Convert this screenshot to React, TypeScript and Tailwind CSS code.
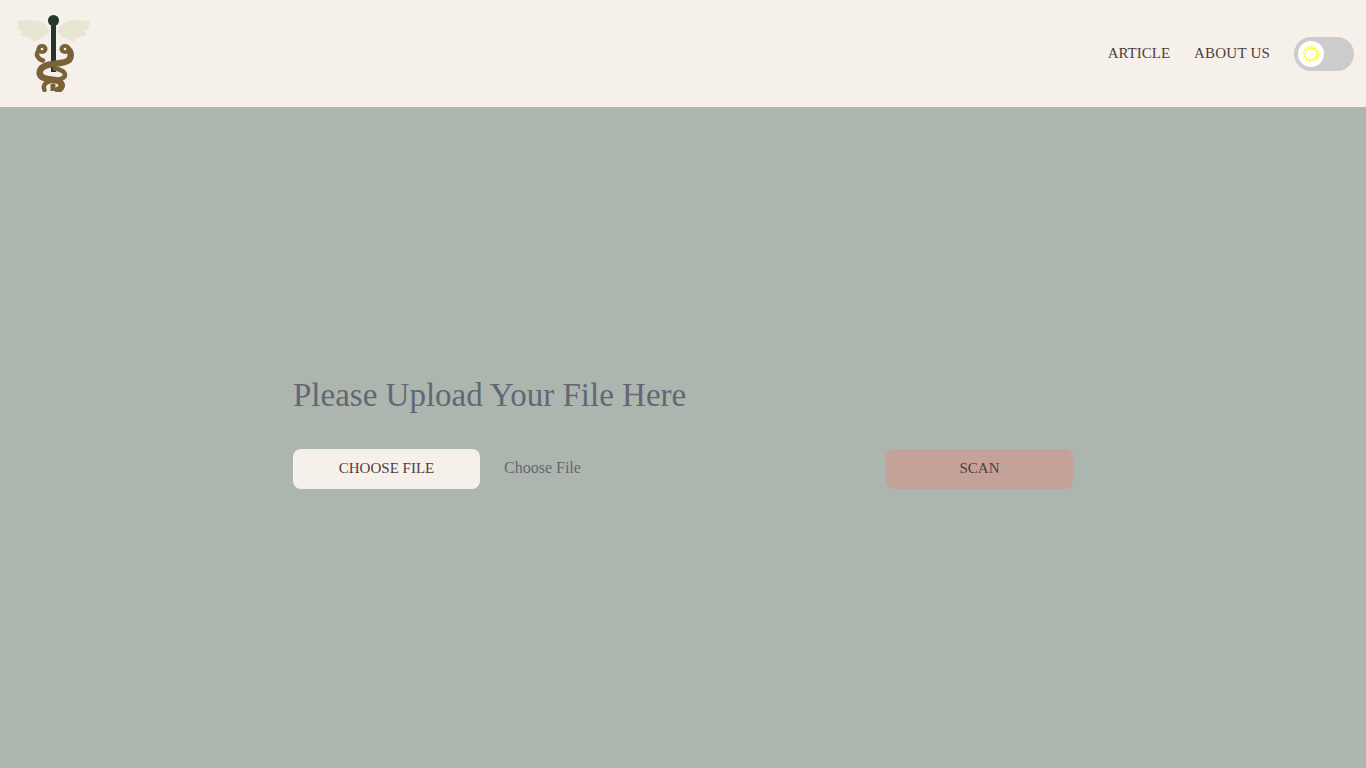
import React from 'react';

const Logo = () => (
  <svg width="73" height="77" viewBox="17 15 73 77" fill="none">
    {/* wings */}
    <path d="M17 21 C24 20 30 20 36 20.5 C42 21 47 25 50 32 C45 37 39 40 33 41.6 C32 39.5 31 38 29 37.5 C26 37 23 36 20 35 C21 33 22 32 23 31 C21 31 20 30 19 29.5 C18 27 18 24 17 21 Z" fill="#e6e6d3" />
    <path d="M90 21 C83 20 77 20 71 20.5 C65 21 60 25 57 32 C62 37 68 40 74 41.6 C75 39.5 76 38 78 37.5 C81 37 84 36 87 35 C86 33 85 32 84 31 C86 31 87 30 88 29.5 C89 27 89 24 90 21 Z" fill="#e6e6d3" />
    {/* staff */}
    <circle cx="53.5" cy="20.5" r="5.5" fill="#27352a" />
    <rect x="51" y="22" width="5" height="50" fill="#27352a" />
    <path d="M50.5 91 V85 C50.5 83 55.5 83 55.5 85 V91 Z" fill="#7a6238" />
    {/* snakes */}
    <path d="M55 68.5 C59 69 65 71 65 75 C65 79 58 79.5 53 80.5 C47 81.5 42 84 44.5 90" stroke="#7a6238" strokeWidth="4.5" strokeLinecap="round" />
    <path d="M66 48 C71 50 72 56 69 60 C64 65 50 62 43 67 C38 71 39 76 44 78 C49 80 56 79 60 82 C63 85 62 88 58 90" stroke="#7a6238" strokeWidth="6.5" strokeLinecap="round" />
    <path d="M42 48 C37 50 36 55 38 57 C39 59 41 60 43 60.5" stroke="#7a6238" strokeWidth="4.5" strokeLinecap="round" />
    <ellipse cx="42" cy="49" rx="5.5" ry="5" fill="#7a6238" />
    <ellipse cx="65" cy="49" rx="5.5" ry="5" fill="#7a6238" />
    <circle cx="42" cy="49" r="1.3" fill="#f5f0ea" />
    <circle cx="65" cy="49" r="1.3" fill="#f5f0ea" />
  </svg>
);

const Sun = () => (
  <svg width="18" height="18" viewBox="0 0 18 18" fill="none">
    <circle cx="9" cy="9" r="6.2" stroke="#ffff00" strokeWidth="1.2" />
    <circle cx="9" cy="9" r="7.6" stroke="#ffff00" strokeWidth="1.4" strokeDasharray="1.6 2.38" />
  </svg>
);

const App: React.FC = () => {
  return (
    <div className="min-h-screen flex flex-col bg-[#adb6ae] font-['Liberation_Serif',serif]">
      <nav className="h-[107px] bg-[#f5f0ea] flex items-center justify-between pl-[17px] pr-3">
        <Logo />
        <div className="flex items-center gap-6 text-[#4f3d3d] text-[15px] pt-px">
          <a href="#" className="-mt-0.5">ARTICLE</a>
          <a href="#" className="tracking-[0.2px] -mt-0.5">ABOUT US</a>
          <div className="w-[60px] h-[34px] rounded-full bg-[#cccccc] flex items-center px-1">
            <div className="w-[26px] h-[26px] rounded-full bg-white flex items-center justify-center">
              <Sun />
            </div>
          </div>
        </div>
      </nav>

      <main className="flex-1 flex items-center justify-center pb-[11px]">
        <div className="w-[780px]">
          <h1 className="text-[33px] leading-[38px] text-[#636775] mt-px mb-[35px]">Please Upload Your File Here</h1>
          <div className="flex items-center">
            <button className="w-[187px] h-10 pb-0.5 rounded-lg bg-[#f5f0ea] text-[#4f3d3d] text-[15px]">CHOOSE FILE</button>
            <span className="ml-6 pb-0.5 text-[16px] text-[#636775]">Choose File</span>
            <button className="ml-auto w-[187px] h-10 pb-0.5 rounded-lg bg-[#c4a298] text-[#4f3d3d] text-[15px]">SCAN</button>
          </div>
        </div>
      </main>
    </div>
  );
};

export default App;
